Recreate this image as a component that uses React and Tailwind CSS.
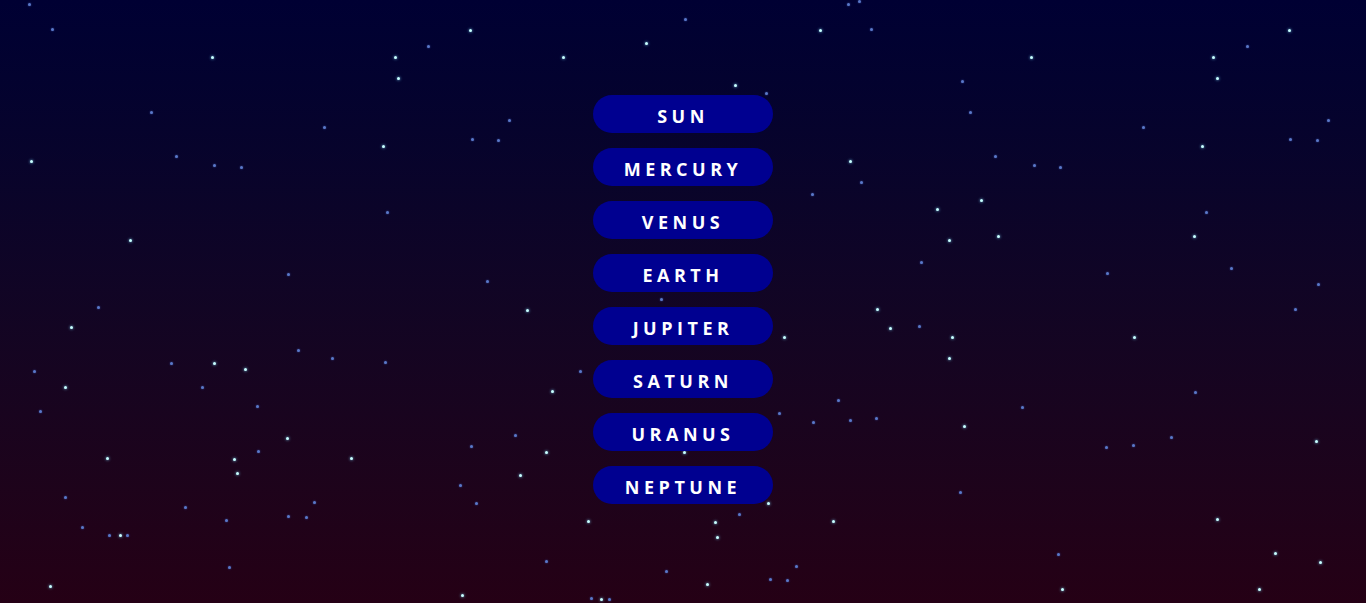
import React from 'react';

const planets = ['Sun', 'Mercury', 'Venus', 'Earth', 'Jupiter', 'Saturn', 'Uranus', 'Neptune'];

// [x, y, bright]
const stars = [
  [29, 4, 0], [52, 29, 0], [212, 57, 1], [395, 57, 1], [428, 46, 0], [470, 30, 1], [563, 57, 1], [646, 43, 1],
  [685, 19, 0], [735, 85, 1], [766, 93, 0], [820, 30, 1], [848, 4, 0], [859, 1, 0], [871, 29, 0], [1031, 57, 1],
  [1213, 57, 1], [1247, 46, 0], [1289, 30, 1], [1217, 78, 1], [398, 78, 1], [962, 81, 0], [970, 112, 0],
  [151, 112, 0], [324, 127, 0], [509, 120, 0], [383, 146, 1], [472, 139, 0], [498, 140, 0], [31, 161, 1],
  [176, 156, 0], [214, 165, 0], [241, 167, 0], [850, 161, 1], [861, 182, 0], [995, 156, 0], [1034, 165, 0],
  [1060, 167, 0], [1143, 127, 0], [1202, 146, 1], [1290, 139, 0], [1317, 140, 0], [1328, 120, 0], [812, 194, 0],
  [981, 200, 1], [937, 209, 1], [387, 212, 0], [1206, 212, 0], [130, 240, 1], [949, 240, 1], [998, 236, 1],
  [1194, 236, 1], [921, 262, 0], [1231, 268, 0], [1107, 273, 0], [288, 274, 0], [487, 281, 0], [1318, 284, 0],
  [98, 307, 0], [661, 299, 0], [527, 310, 1], [877, 309, 1], [1295, 309, 0], [71, 327, 1], [890, 328, 1],
  [919, 326, 0], [784, 337, 1], [952, 337, 1], [1134, 337, 1], [298, 350, 0], [332, 358, 0], [214, 363, 1],
  [171, 363, 0], [245, 369, 1], [385, 362, 0], [949, 358, 1], [34, 371, 0], [580, 371, 0], [65, 387, 1],
  [202, 387, 0], [552, 391, 1], [1195, 392, 0], [838, 400, 0], [257, 406, 0], [40, 411, 0], [1022, 407, 0],
  [779, 413, 0], [813, 422, 0], [850, 420, 0], [876, 418, 0], [964, 426, 1], [287, 438, 1], [515, 435, 0],
  [1171, 437, 0], [1316, 441, 1], [1133, 445, 0], [1106, 447, 0], [471, 446, 0], [546, 452, 1], [258, 451, 0],
  [684, 452, 1], [107, 458, 1], [234, 459, 1], [351, 458, 1], [237, 473, 1], [520, 475, 1], [460, 485, 0],
  [960, 492, 0], [65, 497, 0], [314, 502, 0], [476, 503, 0], [768, 503, 1], [185, 507, 0], [226, 520, 0],
  [288, 516, 0], [306, 517, 0], [588, 521, 1], [715, 522, 1], [739, 514, 0], [833, 521, 1], [1217, 519, 1],
  [82, 527, 0], [109, 535, 0], [120, 535, 1], [127, 535, 0], [717, 537, 1], [1058, 554, 0], [1275, 553, 1],
  [1320, 562, 1], [546, 561, 0], [229, 567, 0], [666, 571, 0], [796, 566, 0], [770, 579, 0], [787, 580, 0],
  [707, 584, 1], [50, 586, 1], [1062, 589, 1], [1259, 589, 1], [462, 595, 1], [591, 598, 0], [601, 599, 1],
  [609, 599, 0],
];

export default function App() {
  return (
    <div className="relative w-full h-[603px] overflow-hidden bg-gradient-to-b from-[#000033] to-[#250015]">
      {/* star field */}
      {stars.map(([x, y, bright], i) => (
        <div
          key={i}
          className={`absolute w-[3px] h-[3px] rounded-full ${bright ? 'bg-[#c8ffff] shadow-[0_0_3px_#7fd8ff]' : 'bg-[#5a78c8] shadow-[0_0_2px_#3a50a0]'}`}
          style={{ left: x - 1, top: y - 1 }}
        />
      ))}

      <nav className="relative flex flex-col items-center gap-[15px] pt-[95px]">
        {planets.map(p => (
          <button
            key={p}
            className="w-[180px] h-[38px] rounded-full bg-[#000090] text-white font-['Open_Sans',sans-serif] font-bold text-[18px] tracking-[4.5px] uppercase pt-[5px]"
          >
            {p}
          </button>
        ))}
      </nav>
    </div>
  );
}
